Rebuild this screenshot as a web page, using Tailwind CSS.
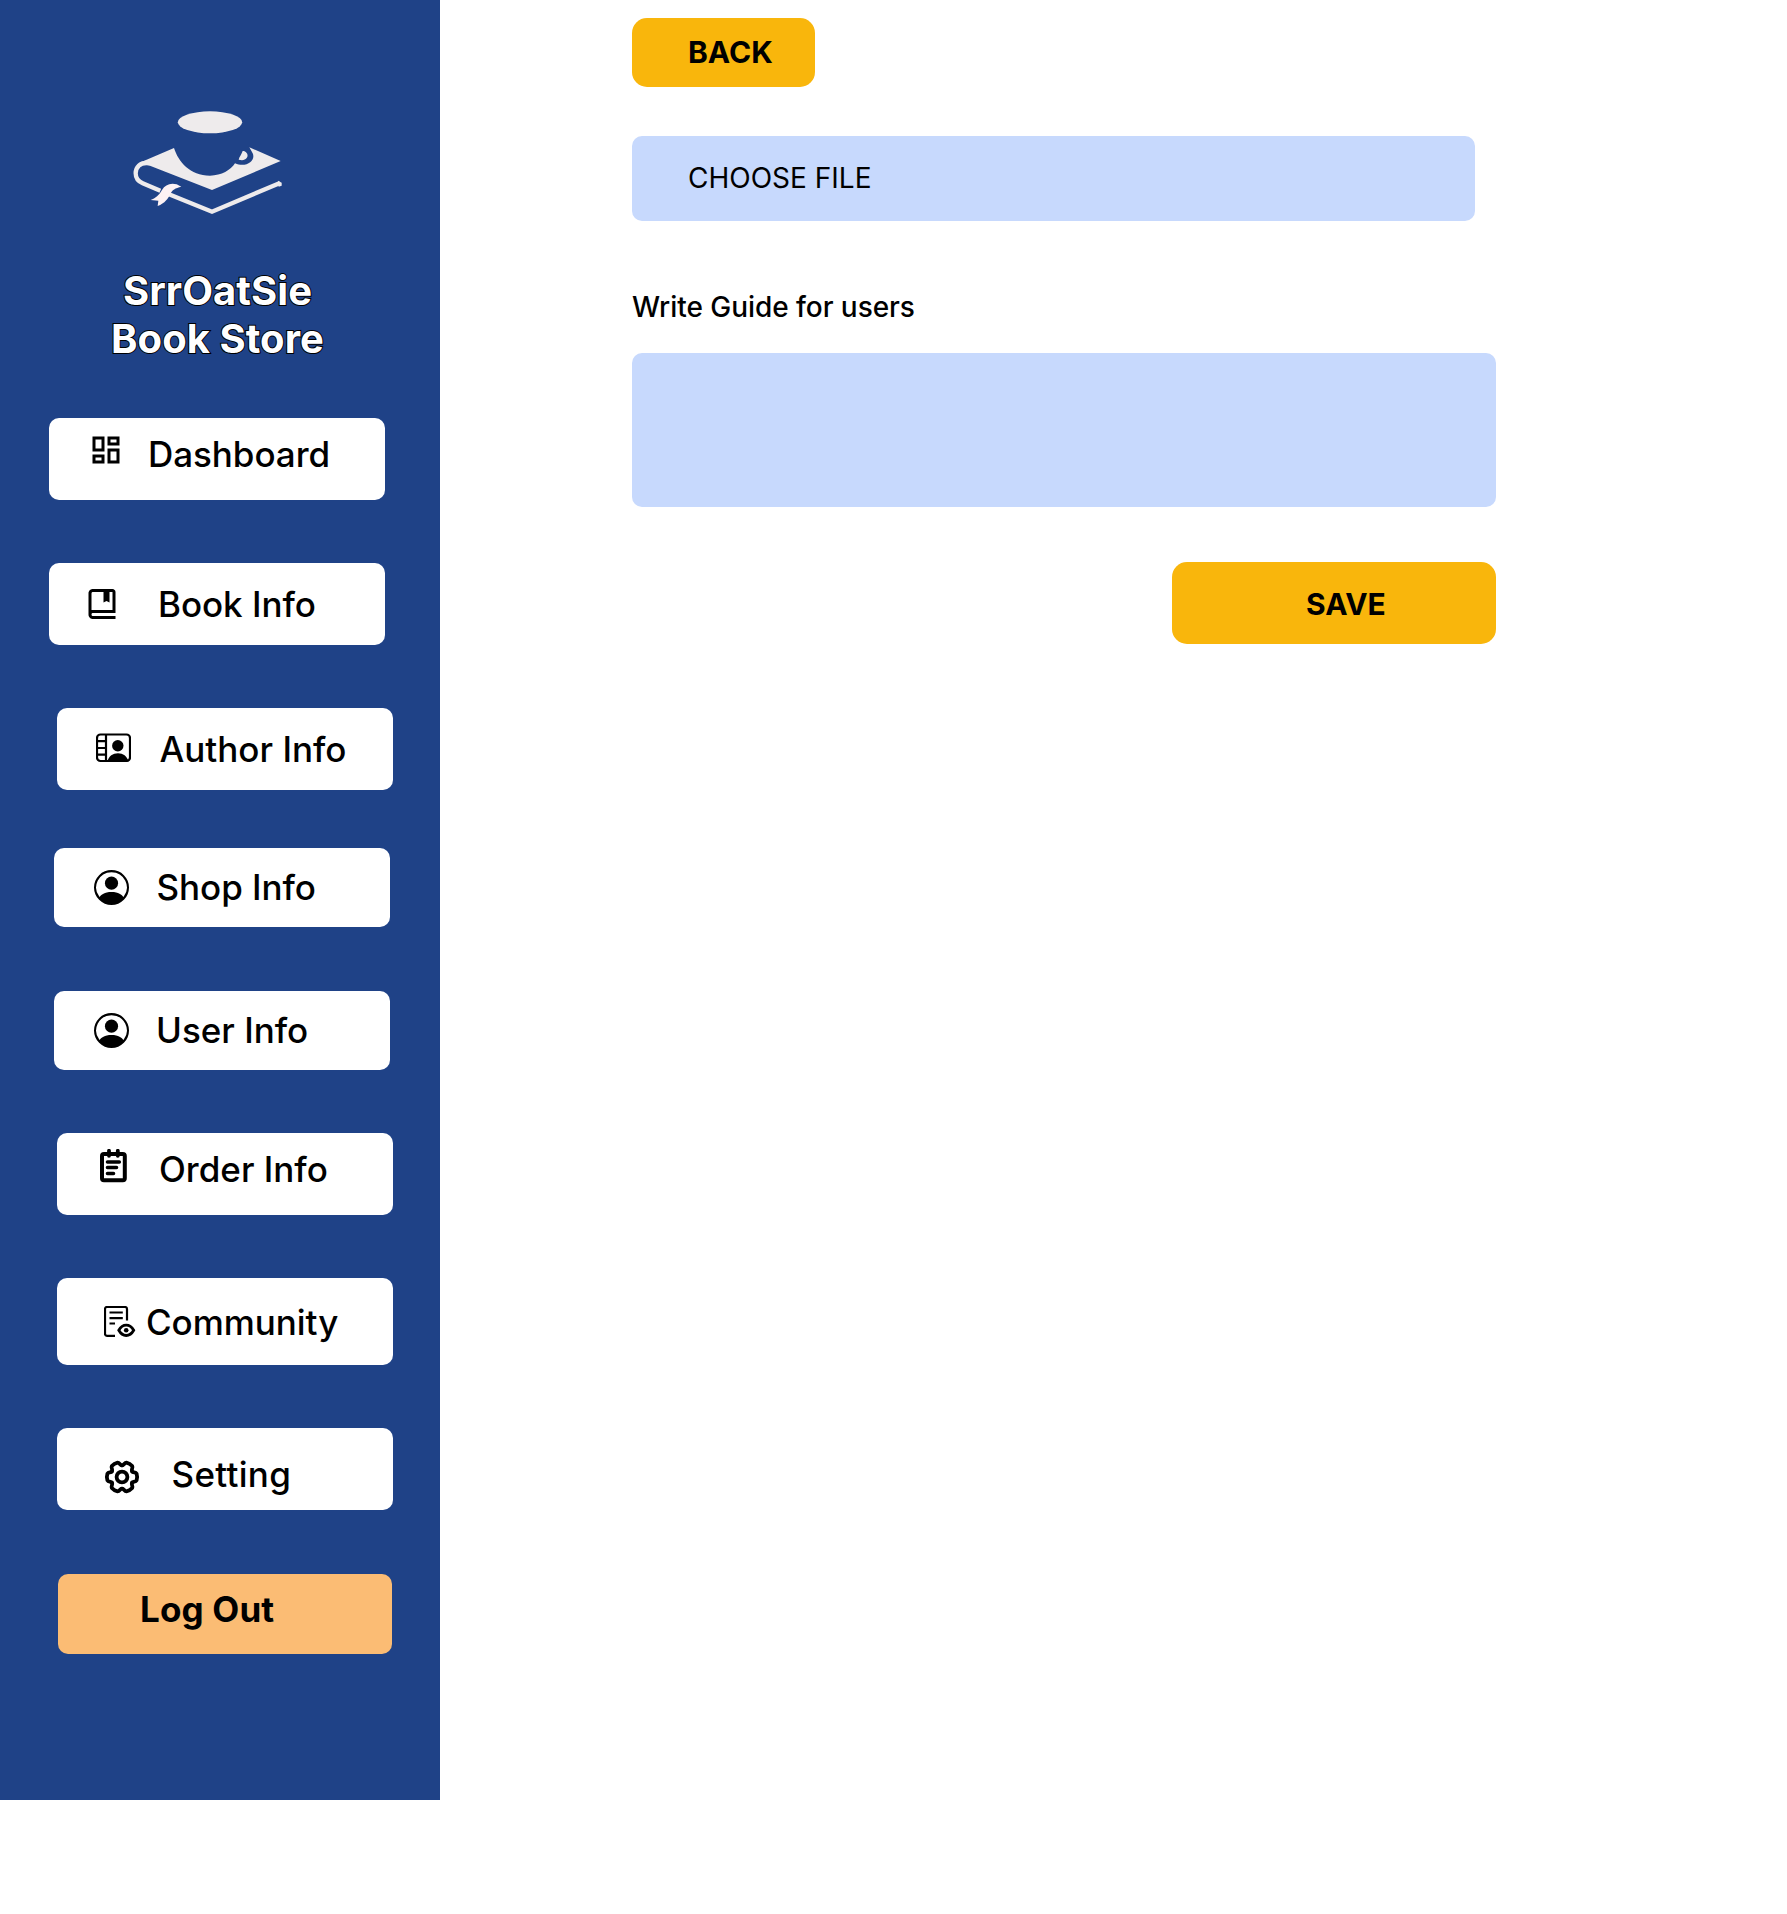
<!DOCTYPE html>
<html lang="en">
<head>
<meta charset="utf-8">
<title>SrrOatSie Book Store</title>
<script src="https://cdn.jsdelivr.net/npm/@tailwindcss/browser@4"></script>
</head>
<body class="flex min-h-screen items-start bg-white font-['Inter',sans-serif] text-black">
<aside class="flex h-[1800px] w-[440px] shrink-0 flex-col items-start bg-[#1f4287]">
  <svg class="ml-[100px] mt-[90px] h-[150px] w-[220px] shrink-0" viewBox="0 0 660 450" fill="#eeebec">
    <ellipse cx="330" cy="97" rx="96.500" ry="33"/>
    <path d="M222 174C235 215 270 257 330 257C365 257 392 240 405 220C440 235 468 210 458 190L448 172L542 213L336 300L146 226L124 216Z"/>
    <path d="M428 183C444 183 452 207 426 211L416 209C418 200 424 195 428 183Z"/>
    <path d="M150 220C118 214 107 234 107 250C107 266 116 275 128 280L181 302M205 312L336 365L540 279" fill="none" stroke="#eeebec" stroke-width="13"/>
    <path d="M534 272L545 278V287L536 290Z"/>
    <path d="M244 290L230 283C210 278 195 285 186 300C178 315 166 325 152 330L175 332L173 348C195 340 205 325 211 312C216 300 226 294 244 290Z" fill="#fdf2f4"/>
  </svg>
  <h1 class="mt-[27px] w-[435px] text-center text-[40px] leading-[48px] font-bold tracking-[0.05px] text-white [paint-order:stroke_fill] [-webkit-text-stroke:2px_#000]">SrrOatSie<br>Book Store</h1>
  <nav class="mt-[55px] flex flex-col items-start text-[35px] leading-[42px] font-medium">
    <a class="ml-[49px] flex h-[82px] w-[336px] items-start rounded-[10px] bg-white">
      <svg class="ml-[39px] mt-[14px] size-9 shrink-0" viewBox="0 0 24 24"><path d="M19 5v2h-4V5h4M9 5v6H5V5h4m10 8v6h-4v-6h4M9 17v2H5v-2h4M21 3h-8v6h8V3M11 3H3v10h8V3m10 8h-8v10h8V11m-10 4H3v6h8v-6Z"/></svg>
      <span class="ml-[24px] mt-[15px] tracking-[-0.05px]">Dashboard</span>
    </a>
    <a class="ml-[49px] mt-[63px] flex h-[82px] w-[336px] items-start rounded-[10px] bg-white">
      <svg class="ml-[35px] mt-[23px] size-9 shrink-0" viewBox="0 0 24 24"><path d="M19 2H6c-1.206 0-3 .799-3 3v14c0 2.201 1.794 3 3 3h15v-2H6.012C5.55 19.988 5 19.806 5 19s.55-.988 1.012-1H21V4c0-1.103-.897-2-2-2zm0 14H5V5c0-.806.55-.988 1-1h7v7l2-1 2 1V4h2v12z"/></svg>
      <span class="ml-[38px] mt-[20px] tracking-[-0.05px]">Book Info</span>
    </a>
    <a class="ml-[57px] mt-[63px] flex h-[82px] w-[336px] items-start rounded-[10px] bg-white">
      <svg class="ml-[39px] mt-[25px] h-[30px] w-[35px] shrink-0" viewBox="0 0 35 30">
        <rect x="1" y="1.5" width="33" height="26.5" rx="3.5" fill="none" stroke="#000" stroke-width="2.200"/>
        <path d="M10 1v27M1 8.2h9M1 15h9M1 21.600h9" fill="none" stroke="#000" stroke-width="2.200"/>
        <circle cx="21.800" cy="12.800" r="5.700"/>
        <path d="M11.500 28.500C12.500 23 17 20.200 22 20.200S31 23 32.500 28.500Z"/>
      </svg>
      <span class="ml-[28.500px] mt-[20px]">Author Info</span>
    </a>
    <a class="ml-[54px] mt-[58px] flex h-[79px] w-[336px] items-start rounded-[10px] bg-white">
      <svg class="ml-[40px] mt-[22px] size-[35px] shrink-0" viewBox="0 0 16 16"><path d="M11 6a3 3 0 1 1-6 0 3 3 0 0 1 6 0z"/><path fill-rule="evenodd" d="M0 8a8 8 0 1 1 16 0A8 8 0 0 1 0 8zm8-7a7 7 0 0 0-5.468 11.37C3.242 11.226 4.805 10 8 10s4.757 1.225 5.468 2.37A7 7 0 0 0 8 1z"/></svg>
      <span class="ml-[27.500px] mt-[18px] tracking-[-0.05px]">Shop Info</span>
    </a>
    <a class="ml-[54px] mt-[64px] flex h-[79px] w-[336px] items-start rounded-[10px] bg-white">
      <svg class="ml-[40px] mt-[22px] size-[35px] shrink-0" viewBox="0 0 16 16"><path d="M11 6a3 3 0 1 1-6 0 3 3 0 0 1 6 0z"/><path fill-rule="evenodd" d="M0 8a8 8 0 1 1 16 0A8 8 0 0 1 0 8zm8-7a7 7 0 0 0-5.468 11.37C3.242 11.226 4.805 10 8 10s4.757 1.225 5.468 2.37A7 7 0 0 0 8 1z"/></svg>
      <span class="ml-[27px] mt-[18px]">User Info</span>
    </a>
    <a class="ml-[57px] mt-[63px] flex h-[82px] w-[336px] items-start rounded-[10px] bg-white">
      <svg class="ml-[43px] mt-[16px] h-[34px] w-[27px] shrink-0" viewBox="0 0 27 34" fill="none" stroke="#000" stroke-linecap="round">
        <rect x="2" y="4.900" width="22.800" height="26.300" rx="2" stroke-width="4"/>
        <path d="M9 1.800v5M17.800 1.800v5" stroke-width="3.800"/>
        <path d="M7.500 13h11.800M7.500 18.500h9M7.500 24.500h6" stroke-width="3.600"/>
      </svg>
      <span class="ml-[32px] mt-[15px]">Order Info</span>
    </a>
    <a class="ml-[57px] mt-[63px] flex h-[87px] w-[336px] items-start rounded-[10px] bg-white">
      <svg class="ml-[47px] mt-[28px] h-[32px] w-[32px] shrink-0" viewBox="0 0 32 32" fill="none" stroke="#000" stroke-width="2.200">
        <path d="M23 14.500V3a2 2 0 0 0-2-2H3a2 2 0 0 0-2 2V27.800a2 2 0 0 0 2 2H11"/>
        <path d="M5.500 6.500H18.800M5.500 12.200H18.800M5.500 17.500H11"/>
        <path d="M14.800 24.300C17 20.400 19.300 19.200 22.200 19.200S27.500 20.400 29.700 24.300C27.500 28.200 25.100 29.500 22.200 29.500S17 28.200 14.800 24.300Z" stroke-width="2.800"/>
        <circle cx="22.200" cy="24.300" r="2.300" fill="#000" stroke="none"/>
      </svg>
      <span class="ml-[10px] mt-[23px] tracking-[-0.05px]">Community</span>
    </a>
    <a class="ml-[57px] mt-[63px] flex h-[82px] w-[336px] items-start rounded-[10px] bg-white">
      <svg class="ml-[47px] mt-[31px] size-9 shrink-0" viewBox="-18 -18 36 36" fill="none" stroke="#000" stroke-width="3.800" stroke-linecap="round">
        <g id="tooth"><path d="M0-11.600C2.200-11.600 2.200-14.300 4.400-14.300C6.800-13.800 8.570-12.800 10.180-10.960C11.290-9.050 8.950-7.700 10.050-5.800"/></g>
        <use href="#tooth" transform="rotate(60)"/><use href="#tooth" transform="rotate(120)"/><use href="#tooth" transform="rotate(180)"/><use href="#tooth" transform="rotate(240)"/><use href="#tooth" transform="rotate(300)"/>
        <circle r="5.400"/>
      </svg>
      <span class="ml-[31.500px] mt-[25px] tracking-[0.3px]">Setting</span>
    </a>
    <a class="ml-[58px] mt-[64px] flex h-[80px] w-[334px] items-start rounded-[10px] bg-[#fbbc74] pl-[82px] pt-[14px] font-bold tracking-[0.15px]">Log Out</a>
  </nav>
</aside>
<main class="ml-[192px] mt-[18px] flex w-[864px] flex-col items-start">
  <button class="h-[69px] w-[183px] rounded-[15px] bg-[#f9b60c] pl-[56px] pb-[1px] text-left text-[30px] leading-9 font-bold">BACK</button>
  <div class="mt-[49px] flex h-[85px] w-[843px] items-center rounded-[10px] bg-[#c7d9fd] pb-[1px] pl-[56px] text-[28px] leading-[34px]">CHOOSE FILE</div>
  <label class="mt-[69px] text-[28px] leading-[34px] font-medium tracking-[-0.05px]">Write Guide for users</label>
  <div class="mt-[29px] h-[154px] w-[864px] rounded-[10px] bg-[#c7d9fd]"></div>
  <button class="mt-[55px] ml-[540px] h-[82px] w-[324px] rounded-[15px] bg-[#f9b60c] pt-[2px] pl-[134px] text-left text-[30px] leading-9 font-bold">SAVE</button>
</main>
</body>
</html>
